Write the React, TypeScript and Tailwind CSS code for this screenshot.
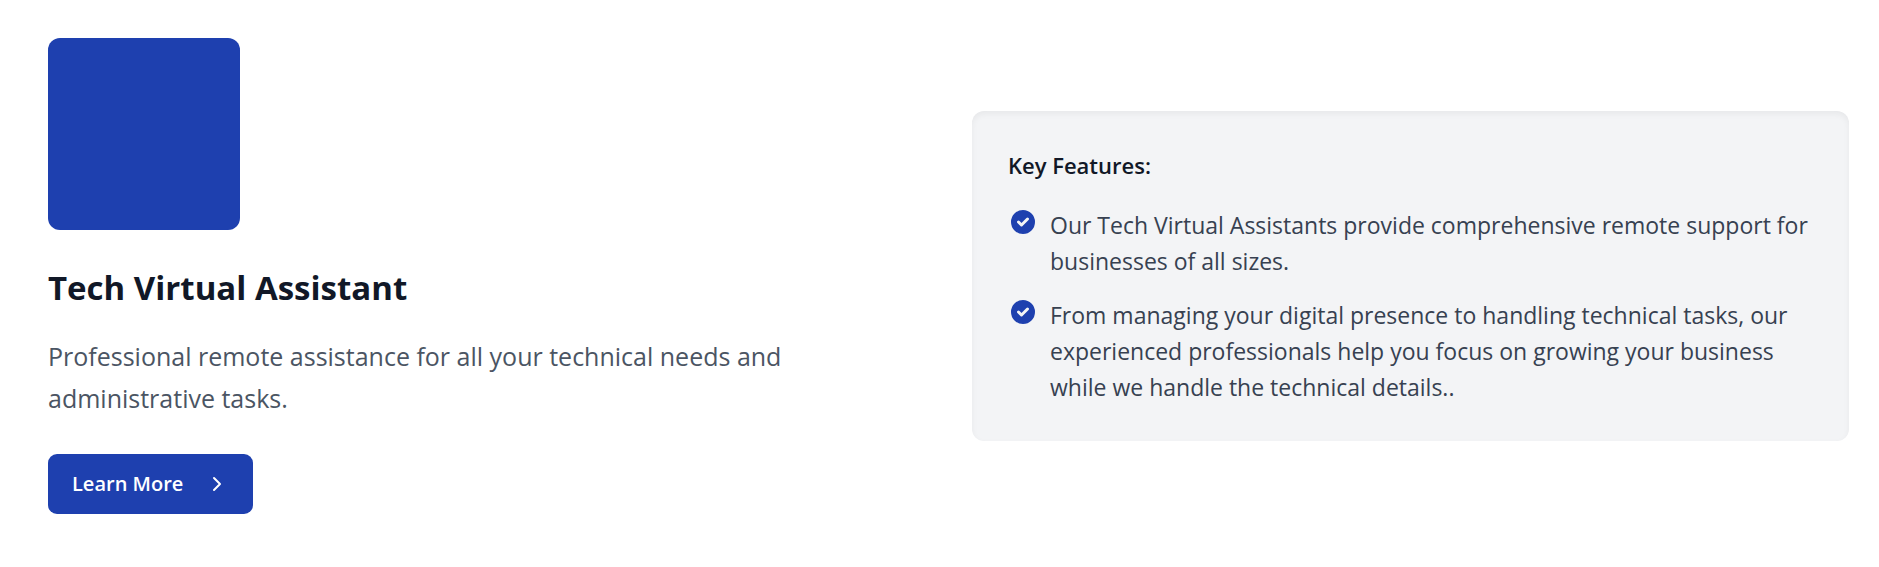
import { ChevronRight } from "lucide-react";

const features = [
  "Our Tech Virtual Assistants provide comprehensive remote support for businesses of all sizes.",
  "From managing your digital presence to handling technical tasks, our experienced professionals help you focus on growing your business while we handle the technical details..",
];

function CheckIcon() {
  return (
    <svg className="size-[30px] shrink-0 text-[#1e40af]" viewBox="0 0 20 20" fill="currentColor" aria-hidden="true">
      <path
        fillRule="evenodd"
        clipRule="evenodd"
        d="M10 18a8 8 0 100-16 8 8 0 000 16zm3.707-9.293a1 1 0 00-1.414-1.414L9 10.586 7.707 9.293a1 1 0 00-1.414 1.414l2 2a1 1 0 001.414 0l4-4z"
      />
    </svg>
  );
}

export default function App() {
  return (
    <main className="grid items-center gap-[47px] bg-white pt-[38px] pr-[30px] pb-[53px] pl-12 font-['Open_Sans','Noto_Sans',sans-serif] lg:grid-cols-2">
      <section className="flex flex-col items-start">
        <div className="size-48 rounded-xl bg-[#1e40af]" />
        <h1 className="mt-[34px] text-[33px] leading-[48px] font-bold text-[#111827]">Tech Virtual Assistant</h1>
        <p className="mt-[23px] text-[25px] leading-[42px] text-[#4b5563]">
          Professional remote assistance for all your technical needs and administrative tasks.
        </p>
        <a
          href="#learn-more"
          className="mt-[35px] flex items-center gap-[22px] rounded-[9px] bg-[#1e40af] px-6 py-[15px] text-[20px] leading-[30px] font-semibold text-white"
        >
          Learn More
          <ChevronRight className="size-6" strokeWidth={2} aria-hidden="true" />
        </a>
      </section>
      <section className="rounded-xl bg-[#f3f4f6] p-9 shadow-[inset_0_3px_6px_0_rgb(0_0_0/0.05)]">
        <h2 className="text-[22px] leading-9 font-semibold text-[#111827]">Key Features:</h2>
        <ul className="mt-6 flex flex-col gap-[18px]">
          {features.map((feature) => (
            <li key={feature} className="flex items-start gap-3">
              <CheckIcon />
              <span className="text-[23px] leading-9 text-[#374151]">{feature}</span>
            </li>
          ))}
        </ul>
      </section>
    </main>
  );
}
